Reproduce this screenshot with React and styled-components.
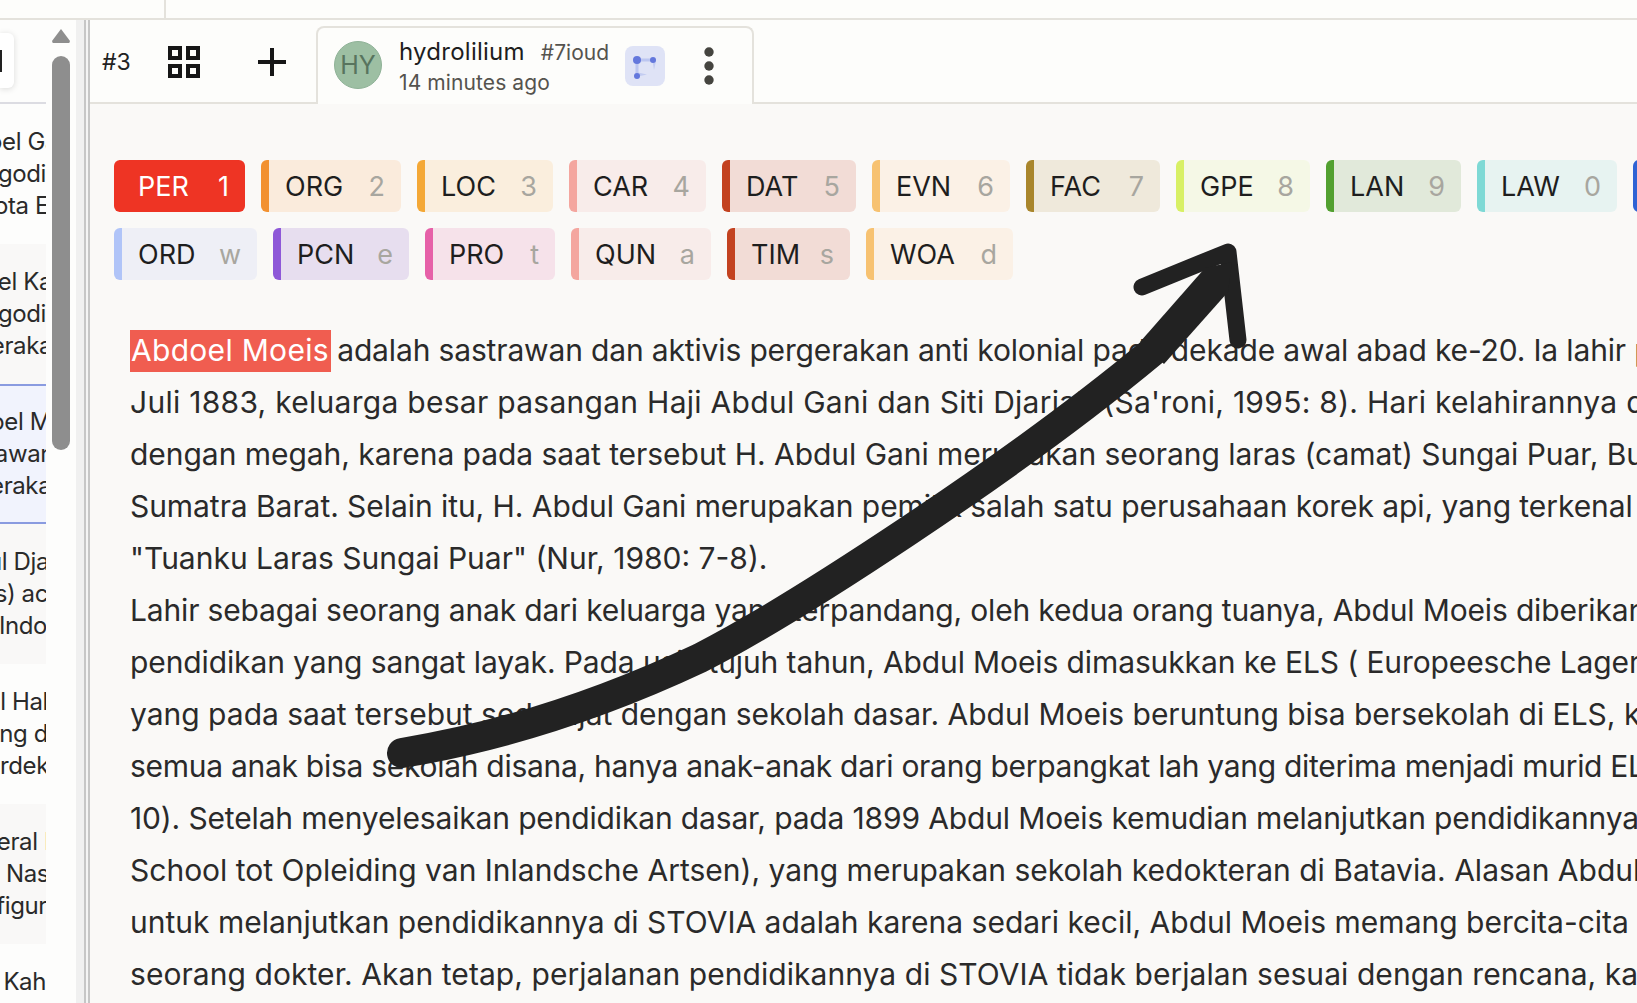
import React from "react";
import styled, { createGlobalStyle } from "styled-components";

const FONT = `Inter, "Noto Sans", sans-serif`;

const GlobalStyle = createGlobalStyle`
  html, body {
    margin: 0;
    padding: 0;
    height: 100%;
    overflow: hidden;
    background: #fdfdfb;
    font-family: ${FONT};
  }
  * { box-sizing: border-box; }
`;

const Page = styled.div`
  position: relative;
  width: 100vw;
  height: 100vh;
  display: flex;
  flex-direction: column;
  overflow: hidden;
  color: #2a2a2a;
`;

const TopBar = styled.div`
  flex: none;
  height: 20px;
  border-bottom: 2px solid #e4e2dc;
  background: #fdfdfb;
`;

const TopCell = styled.div`
  width: 166px;
  height: 18px;
  border-right: 2px solid #e4e2dc;
`;

const Body = styled.div`
  flex: 1;
  min-height: 0;
  display: flex;
`;

const Sidebar = styled.aside`
  flex: none;
  width: 46px;
  display: flex;
  flex-direction: column;
  overflow: hidden;
  background: #fdfdfc;
`;

const SearchRow = styled.div`
  flex: none;
  height: 84px;
  padding-top: 13px;
  border-bottom: 2px solid #dcdce2;
`;

const SearchBox = styled.div`
  width: 14px;
  height: 55px;
  background: #fff;
  border-radius: 0 6px 6px 0;
  box-shadow: 0 1px 6px rgba(0, 0, 0, 0.14);
  display: flex;
  align-items: center;
`;

const SearchMark = styled.span`
  width: 2px;
  height: 22px;
  background: #222;
`;

const Entry = styled.div`
  flex: none;
  height: 140px;
  padding-top: ${(p) => (p.$selected ? 20 : 22)}px;
  background: ${(p) => (p.$selected ? "#f1f3fd" : p.$alt ? "#f9f8f7" : "#fdfdfc")};
  border-top: ${(p) => (p.$selected ? "2px solid #8a9be0" : "none")};
  border-bottom: ${(p) => (p.$selected ? "2px solid #8a9be0" : "none")};
  font-size: 24px;
  line-height: 32px;
  letter-spacing: -0.4px;
`;

const EntryLine = styled.div`
  white-space: nowrap;
  display: flex;
  justify-content: flex-end;
  margin-right: ${(p) => -(p.$cut || 0)}px;
`;

const ScrollTrack = styled.div`
  flex: none;
  width: 30px;
  background: #fdfdfc;
  padding: 9px 6px 0;
  display: flex;
  flex-direction: column;
  gap: 13px;
`;

const ScrollArrow = styled.div`
  width: 18px;
  height: 14px;
  background: #8e8e8e;
  clip-path: polygon(50% 0, 100% 85%, 96% 100%, 4% 100%, 0 85%);
`;

const ScrollThumb = styled.div`
  width: 18px;
  height: 394px;
  background: #8e8e8e;
  border-radius: 9px;
`;

const Gutter = styled.div`
  flex: none;
  width: 14px;
  display: flex;
  background: #f0f0f0;
`;

const GutterFill = styled.div`
  width: 8px;
`;

const GutterLine = styled.div`
  width: 2px;
  background: ${(p) => (p.$light ? "#f4f4f4" : "#c6c6c6")};
`;

const Main = styled.main`
  flex: 1;
  min-width: 0;
  display: flex;
  flex-direction: column;
  background: #faf9f7;
  overflow: hidden;
`;

const TabBar = styled.div`
  flex: none;
  height: 84px;
  display: flex;
  background: #fdfdfb;
  border-bottom: 2px solid #e4e2dc;
`;

const TabIndex = styled.span`
  flex: none;
  width: 78px;
  padding: 28px 0 0 12px;
  font-size: 23px;
  line-height: 28px;
  color: #222;
`;

const TabTool = styled.button`
  flex: none;
  width: ${(p) => p.$width}px;
  height: 82px;
  margin-left: ${(p) => p.$offset || 0}px;
  padding: 2px 0 0;
  border: 0;
  background: none;
  display: flex;
  align-items: center;
  justify-content: center;
`;

const Tab = styled.div`
  flex: none;
  width: 438px;
  height: 78px;
  margin: 6px 0 -2px 30px;
  padding: 0 0 0 16px;
  display: flex;
  align-items: center;
  background: #fdfdfb;
  border: 2px solid #e4e2dc;
  border-bottom: 0;
  border-radius: 8px 8px 0 0;
`;

const Avatar = styled.div`
  flex: none;
  width: 48px;
  height: 48px;
  margin-top: -2px;
  border-radius: 50%;
  background: #9dbfa3;
  border: 1px solid #8fb297;
  color: #58745e;
  font-size: 25px;
  display: flex;
  align-items: center;
  justify-content: center;
`;

const TabInfo = styled.div`
  flex: none;
  width: 210px;
  margin-left: 17px;
  display: flex;
  flex-direction: column;
`;

const TabHead = styled.div`
  display: flex;
  align-items: baseline;
  justify-content: space-between;
  line-height: 32px;
`;

const UserName = styled.span`
  font-size: 24px;
  letter-spacing: 0.25px;
  color: #1e1e1e;
`;

const UserTag = styled.span`
  font-size: 21px;
  color: #55534e;
`;

const TabTime = styled.span`
  font-size: 21px;
  line-height: 28px;
  letter-spacing: 0.1px;
  color: #55534e;
`;

const ModeBadge = styled.div`
  flex: none;
  width: 40px;
  height: 40px;
  margin-left: 16px;
  border-radius: 8px;
  background: #dfe3f6;
  display: flex;
  align-items: center;
  justify-content: center;
`;

const MoreButton = styled.div`
  flex: none;
  margin-left: 39px;
  display: flex;
`;

const Content = styled.div`
  flex: 1;
  min-height: 0;
  padding: 56px 0 0 24px;
`;

const TagRow = styled.div`
  display: flex;
  gap: 16px;
  width: 1900px;
  margin-bottom: 16px;
`;

const TagChip = styled.div`
  flex: none;
  width: ${(p) => p.$width}px;
  height: 52px;
  padding: 0 16px;
  display: flex;
  align-items: center;
  justify-content: space-between;
  font-size: 27px;
  background: ${(p) => p.$bg};
  border-left: 8px solid ${(p) => p.$edge};
  border-radius: 6px;
  color: ${(p) => (p.$active ? "#fff" : "#1e1e1e")};
`;

const TagKey = styled.span`
  color: ${(p) => (p.$active ? "#fff" : "#a8a69f")};
`;

const Article = styled.div`
  margin: 44px 0 0 17px;
  font-size: 30px;
  line-height: 52px;
  color: #2a2a2a;
  white-space: nowrap;
`;

const ArticleLine = styled.div`
  margin-left: ${(p) => (p.$first ? 0 : -1)}px;
  letter-spacing: ${(p) => p.$track || 0}px;
`;

const Mention = styled.span`
  display: inline-block;
  height: 42px;
  line-height: 40px;
  padding: 0 2px 0 1px;
  margin: 0 -2px 0 -1px;
  letter-spacing: 0.3px;
  background: #f05d50;
  color: #fff;
`;

const Scribble = styled.svg`
  position: absolute;
  inset: 0;
  width: 100%;
  height: 100%;
  pointer-events: none;
`;

const entries = [
  { lines: [["Abdoel Ga", 12], ["Mangodi", 0], ["Kota E", 3]] },
  { alt: true, lines: [["Abdoel Ka", 6], ["Mangodi", 0], ["Pergeraka", 6]] },
  { selected: true, lines: [["Abdoel M", 5], ["sastrawan", 8], ["pergerakan", 19]] },
  { alt: true, lines: [["Abdul Dja", 3], ["ikus) ac", 2], ["Indo", 1]] },
  { lines: [["Abdul Hal", 2], ["yang d", 2], ["Merdek", 3]] },
  { alt: true, lines: [["Jenderal I", 4], ["di Nas", 3], ["figur", 1]] },
  { lines: [["Abdul Kah", 0]] },
];

const row1 = [
  { label: "PER", key_: "1", width: 131, edge: "#ee3424", bg: "#ee3424", active: true },
  { label: "ORG", key_: "2", width: 140, edge: "#f29130", bg: "#faebdc" },
  { label: "LOC", key_: "3", width: 136, edge: "#f4a836", bg: "#faeedd" },
  { label: "CAR", key_: "4", width: 137, edge: "#f4a69f", bg: "#f8ecea" },
  { label: "DAT", key_: "5", width: 134, edge: "#c34220", bg: "#f2dcd6" },
  { label: "EVN", key_: "6", width: 138, edge: "#f7c271", bg: "#fbf1e6" },
  { label: "FAC", key_: "7", width: 134, edge: "#a9862c", bg: "#efe9db" },
  { label: "GPE", key_: "8", width: 134, edge: "#d8f065", bg: "#f5f8e6" },
  { label: "LAN", key_: "9", width: 135, edge: "#52a030", bg: "#e1e9da" },
  { label: "LAW", key_: "0", width: 140, edge: "#7ed9d5", bg: "#e7f3f1" },
  { label: "MON", key_: "q", width: 140, edge: "#2f63d4", bg: "#dfe6f6" },
];

const row2 = [
  { label: "ORD", key_: "w", width: 143, edge: "#b0c4f8", bg: "#eeeff6" },
  { label: "PCN", key_: "e", width: 136, edge: "#8e58d8", bg: "#e7deef" },
  { label: "PRO", key_: "t", width: 130, edge: "#e660a8", bg: "#f6e2ea" },
  { label: "QUN", key_: "a", width: 140, edge: "#f4a69f", bg: "#f8ecea" },
  { label: "TIM", key_: "s", width: 123, edge: "#c34220", bg: "#f2dcd6" },
  { label: "WOA", key_: "d", width: 147, edge: "#f7c271", bg: "#fbf1e6" },
];

// track nudges each line so its words land where the reference has them
const articleLines = [
  { track: -0.15, text: "adalah sastrawan dan aktivis pergerakan anti kolonial pada dekade awal abad ke-20. Ia lahir pada 3" },
  { track: 0.28, text: "Juli 1883, keluarga besar pasangan Haji Abdul Gani dan Siti Djariah (Sa'roni, 1995: 8). Hari kelahirannya dirayakan" },
  { track: -0.04, text: "dengan megah, karena pada saat tersebut H. Abdul Gani merupakan seorang laras (camat) Sungai Puar, Bukittinggi," },
  { track: -0.06, text: "Sumatra Barat. Selain itu, H. Abdul Gani merupakan pemilik salah satu perusahaan korek api, yang terkenal dengan" },
  { track: 0, text: "\"Tuanku Laras Sungai Puar\" (Nur, 1980: 7-8)." },
  { track: -0.16, text: "Lahir sebagai seorang anak dari keluarga yang terpandang, oleh kedua orang tuanya, Abdul Moeis diberikan" },
  { track: -0.11, text: "pendidikan yang sangat layak. Pada usia tujuh tahun, Abdul Moeis dimasukkan ke ELS ( Europeesche Lagere School)" },
  { track: 0, text: "yang pada saat tersebut sederajat dengan sekolah dasar. Abdul Moeis beruntung bisa bersekolah di ELS, karena" },
  { track: -0.28, text: "semua anak bisa sekolah disana, hanya anak-anak dari orang berpangkat lah yang diterima menjadi murid ELS (Nur," },
  { track: -0.15, text: "10). Setelah menyelesaikan pendidikan dasar, pada 1899 Abdul Moeis kemudian melanjutkan pendidikannya di" },
  { track: 0, text: "School tot Opleiding van Inlandsche Artsen), yang merupakan sekolah kedokteran di Batavia. Alasan Abdul Moeis" },
  { track: 0, text: "untuk melanjutkan pendidikannya di STOVIA adalah karena sedari kecil, Abdul Moeis memang bercita-cita menjadi" },
  { track: 0.06, text: "seorang dokter. Akan tetap, perjalanan pendidikannya di STOVIA tidak berjalan sesuai dengan rencana, karena" },
];

const GridIcon = () => (
  <svg width="32" height="32" viewBox="0 0 32 32">
    <path
      fill="#161616"
      fillRule="evenodd"
      d="M0 0h14v14H0zM4 4v6h6V4zM18 0h14v14H18zM22 4v6h6V4zM0 18h14v14H0zM4 22v6h6v-6zM18 18h14v14H18zM22 22v6h6v-6z"
    />
  </svg>
);

const PlusIcon = () => (
  <svg width="28" height="28" viewBox="0 0 28 28">
    <path d="M14 0v28M0 14h28" stroke="#161616" strokeWidth="4" />
  </svg>
);

const ModeIcon = () => (
  <svg width="26" height="26" viewBox="0 0 26 26">
    <path d="M5 7h18M5 7v16" stroke="#bcc6f0" strokeWidth="3" fill="none" />
    <path d="M20.5 8h3.5l-2 9zM6 19.5l9 2-9 2z" fill="#c3ccf1" />
    <circle cx="5" cy="7" r="4" fill="#6478dc" />
    <circle cx="21" cy="7" r="3" fill="#6478dc" />
    <circle cx="5" cy="23" r="3" fill="#6478dc" />
  </svg>
);

const MoreIcon = () => (
  <svg width="10" height="38" viewBox="0 0 10 38">
    <circle cx="5" cy="5" r="4.7" fill="#45443f" />
    <circle cx="5" cy="19" r="4.7" fill="#45443f" />
    <circle cx="5" cy="33" r="4.7" fill="#45443f" />
  </svg>
);

const Tag = ({ tag }) => (
  <TagChip $width={tag.width} $edge={tag.edge} $bg={tag.bg} $active={tag.active}>
    <span>{tag.label}</span>
    <TagKey $active={tag.active}>{tag.key_}</TagKey>
  </TagChip>
);

const App = () => (
  <Page>
    <GlobalStyle />
    <TopBar>
      <TopCell />
    </TopBar>
    <Body>
      <Sidebar>
        <SearchRow>
          <SearchBox>
            <SearchMark />
          </SearchBox>
        </SearchRow>
        {entries.map((entry, i) => (
          <Entry key={i} $alt={entry.alt} $selected={entry.selected}>
            {entry.lines.map(([text, cut]) => (
              <EntryLine key={text} $cut={cut}>
                {text}
              </EntryLine>
            ))}
          </Entry>
        ))}
      </Sidebar>
      <ScrollTrack>
        <ScrollArrow />
        <ScrollThumb />
      </ScrollTrack>
      <Gutter>
        <GutterFill />
        <GutterLine />
        <GutterLine $light />
        <GutterLine />
      </Gutter>
      <Main>
        <TabBar>
          <TabIndex>#3</TabIndex>
          <TabTool $width={32}>
            <GridIcon />
          </TabTool>
          <TabTool $width={28} $offset={58}>
            <PlusIcon />
          </TabTool>
          <Tab>
            <Avatar>HY</Avatar>
            <TabInfo>
              <TabHead>
                <UserName>hydrolilium</UserName>
                <UserTag>#7ioud</UserTag>
              </TabHead>
              <TabTime>14 minutes ago</TabTime>
            </TabInfo>
            <ModeBadge>
              <ModeIcon />
            </ModeBadge>
            <MoreButton>
              <MoreIcon />
            </MoreButton>
          </Tab>
        </TabBar>
        <Content>
          <TagRow>
            {row1.map((tag) => (
              <Tag key={tag.label} tag={tag} />
            ))}
          </TagRow>
          <TagRow>
            {row2.map((tag) => (
              <Tag key={tag.label} tag={tag} />
            ))}
          </TagRow>
          <Article>
            {articleLines.map((line, i) => (
              <ArticleLine key={i} $first={i === 0} $track={line.track}>
                {i === 0 && <Mention>Abdoel Moeis</Mention>}
                {i === 0 && " "}
                {line.text}
              </ArticleLine>
            ))}
          </Article>
        </Content>
      </Main>
    </Body>
    <Scribble viewBox="0 0 1637 1003">
      <g fill="none" stroke="#222" strokeLinecap="round" strokeLinejoin="round">
        <path strokeWidth="30" d="M402 753C500 737 600 705 700 658C790 612 1010 470 1152 352" />
        <path strokeWidth="17" d="M1142 287L1228 252L1238 340" />
      </g>
      <path fill="#222" d="M1140 342L1205 268L1232 262L1228 292L1164 364z" />
    </Scribble>
  </Page>
);

export default App;
